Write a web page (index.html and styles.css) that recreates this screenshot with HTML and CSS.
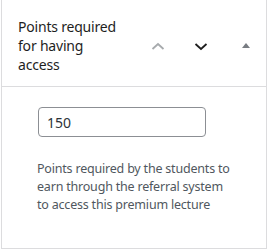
FILE: index.html
```html
<!DOCTYPE html>
<html lang="en">
<head>
<meta charset="utf-8">
<title>Points required</title>
<link rel="stylesheet" href="styles.css">
</head>
<body>
<div class="panel">
  <div class="panel-header">
    <h2 class="panel-title">Points required<br>for having<br>access</h2>
    <div class="panel-actions">
      <button class="icon-btn up" aria-label="Move up">
        <svg width="24" height="24" viewBox="0 0 24 24"><path d="M6.5 15l5.5-5 5.5 5" fill="none" stroke="currentColor" stroke-width="1.8"/></svg>
      </button>
      <button class="icon-btn down" aria-label="Move down">
        <svg width="24" height="24" viewBox="0 0 24 24"><path d="M6.5 10l5.5 5 5.5-5" fill="none" stroke="currentColor" stroke-width="1.8"/></svg>
      </button>
      <button class="icon-btn toggle" aria-label="Toggle panel">
        <svg width="24" height="24" viewBox="0 0 24 24"><path d="M8 14h8l-4-5z" fill="currentColor"/></svg>
      </button>
    </div>
  </div>
  <div class="panel-body">
    <input class="text-input" type="text" value="150">
    <p class="help">Points required by the students to<br>earn through the referral system<br>to access this premium lecture</p>
  </div>
</div>
</body>
</html>
```
FILE: styles.css
```css
html, body {
  margin: 0;
  padding: 0;
  background: #ffffff;
}
body {
  font-family: "Noto Sans", "Open Sans", sans-serif;
}
.panel {
  margin-left: 1px;
  width: 264px;
  border: 1px solid #dcdcde;
  border-top: none;
  height: 248px;
  background: #fff;
}
.panel-header {
  display: flex;
  align-items: center;
  padding: 17px 0 12px 16px;
  border-bottom: 1px solid #dcdcde;
}
.panel-title {
  margin: 0;
  width: 112px;
  font-size: 14px;
  line-height: 19px;
  font-weight: 400;
  letter-spacing: -0.2px;
  color: #1e1e1e;
}
.panel-actions {
  display: flex;
  align-items: center;
  margin-left: 16px;
  gap: 19px;
}
.icon-btn {
  width: 24px;
  height: 24px;
  padding: 0;
  border: none;
  background: none;
  display: flex;
  align-items: center;
  justify-content: center;
}
.up { color: #a7aaad; }
.down { color: #1e1e1e; }
.toggle { color: #787c82; margin-left: 2px; }
.panel-body {
  padding: 20px 16px 16px 35px;
}
.text-input {
  display: block;
  box-sizing: border-box;
  width: 168px;
  height: 30px;
  margin: 0 0 0 1px;
  padding: 0 8px;
  border: 1px solid #8c8f94;
  border-radius: 4px;
  font-family: inherit;
  font-size: 14px;
  color: #2c3338;
}
.help {
  margin: 23px 0 0;
  font-size: 12.5px;
  line-height: 18px;
  letter-spacing: -0.2px;
  color: #50575e;
}
```
